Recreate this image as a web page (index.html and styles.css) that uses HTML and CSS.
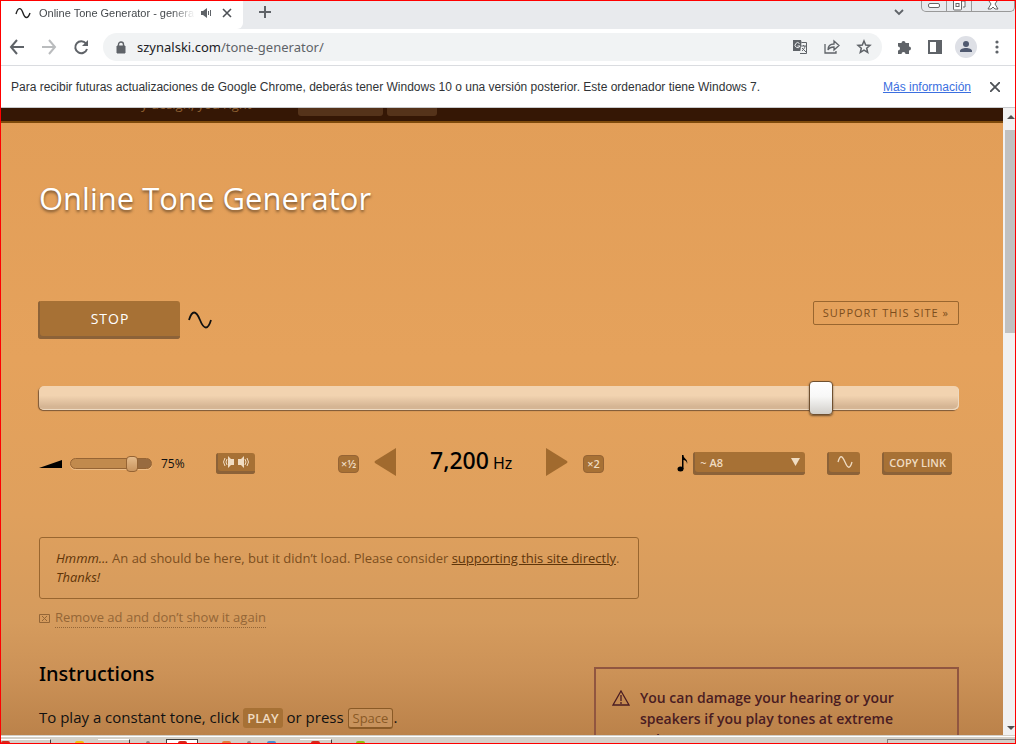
FILE: index.html
```html
<!DOCTYPE html>
<html lang="en">
<head>
    <meta charset="UTF-8">
    <meta name="viewport" content="width=device-width, initial-scale=1.0">
    <title>Online Tone Generator</title>
    <link rel="stylesheet" href="styles.css">
</head>
<body>
    <!-- Tab strip -->
    <div class="tab-strip">
        <div class="tab">
            <svg width="16" height="16" viewBox="0 0 16 16" fill="none" stroke="#222" stroke-width="1.4"><path d="M1 9C3 2 6 2 8 8s5 6 7 0"/></svg>
            <span class="tab-title">Online Tone Generator - genera</span>
            <svg class="tab-sound" width="12" height="12" viewBox="0 0 12 12" fill="#5f6368"><path d="M1 4h2l4-3v10L3 8H1zM8 4h1v4H8zM10 3h1v6h-1z"/></svg>
            <button class="icon-btn" aria-label="Close tab"><svg width="10" height="10" viewBox="0 0 10 10" stroke="#4d5156" stroke-width="1.6"><path d="M1 1l8 8M9 1L1 9"/></svg></button>
        </div>
        <button class="icon-btn new-tab" aria-label="New tab"><svg width="12" height="12" viewBox="0 0 12 12" stroke="#5f6368" stroke-width="2"><path d="M6 0v12M0 6h12"/></svg></button>
        <button class="icon-btn tab-search" aria-label="Search tabs"><svg width="12" height="8" viewBox="0 0 12 8" fill="none" stroke="#5f6368" stroke-width="1.8"><path d="M2 1l4 4 4-4"/></svg></button>
        <div class="window-buttons">
            <button aria-label="Minimize"><svg width="12" height="6" viewBox="0 0 12 6" fill="#fff" stroke="#666"><rect x=".5" y=".5" width="11" height="4" rx="1.5"/></svg></button>
            <button aria-label="Restore"><svg width="14" height="10" viewBox="0 0 14 10" fill="#fff" stroke="#666"><path d="M10 0h3v6h-2"/><rect x="1.500" y="-2" width="8" height="11" rx="1"/><rect x="4" y="2.500" width="3" height="3"/></svg></button>
            <button aria-label="Close"><svg width="12" height="9" viewBox="0 0 12 9" fill="#fff" stroke="#666"><path d="M2 0l2 3L1 8h3l2-2 2 2h3L8 3l2-3"/></svg></button>
        </div>
    </div>

    <!-- Toolbar -->
    <div class="toolbar">
        <button class="icon-btn" aria-label="Back"><svg width="16" height="16" viewBox="0 0 16 16" fill="none" stroke="#5f6368" stroke-width="2"><path d="M15 8H2M8 1L2 8l6 7"/></svg></button>
        <button class="icon-btn" aria-label="Forward"><svg width="16" height="16" viewBox="0 0 16 16" fill="none" stroke="#babcbe" stroke-width="2"><path d="M1 8h13M8 1l6 7-6 7"/></svg></button>
        <button class="icon-btn" aria-label="Reload"><svg width="16" height="16" viewBox="0 0 16 16" fill="none" stroke="#5f6368" stroke-width="2"><path d="M13 4.500A6 6 0 1 0 14 10"/><path d="M15 1v6H9z" fill="#5f6368" stroke="none"/></svg></button>
        <div class="address-bar">
            <svg width="10" height="13" viewBox="0 0 10 13"><path d="M1 5h8v7H1z" fill="#5f6368" stroke="#5f6368"/><path d="M2.500 5V3.500a2.500 2.500 0 0 1 5 0V5" fill="none" stroke="#5f6368" stroke-width="1.400"/></svg>
            <span class="url"><b>szynalski.com</b>/tone-generator/</span>
            <button class="icon-btn" aria-label="Translate"><svg width="16" height="16" viewBox="0 0 16 16"><path d="M1 1h8l3 11H1z" fill="#5f6368"/><path d="M9.500 3.500h5v11H8" fill="#f1f3f4" stroke="#5f6368"/><path d="M7.500 4.500a2.500 2.500 0 1 0 .5 2.500H5.500" fill="none" stroke="#f1f3f4"/><path d="M9 7h5M11.500 6v1M13 7c0 2-2 4-3 5M10 9l4 4" fill="none" stroke="#5f6368"/></svg></button>
            <button class="icon-btn" aria-label="Share"><svg width="16" height="16" viewBox="0 0 16 16" fill="none" stroke="#5f6368" stroke-width="1.300"><path d="M1 5v9h11v-2M4 11c0-4 2-6 6-6V2l5 4.500L10 11V8c-3 0-5 1-6 3z"/></svg></button>
            <button class="icon-btn" aria-label="Bookmark"><svg width="16" height="16" viewBox="0 0 16 16" fill="none" stroke="#5f6368" stroke-width="1.500"><path d="M8 2l1.700 4 4.300.4-3.300 2.800 1 4.300L8 11.200l-3.700 2.300 1-4.300L2 6.400 6.300 6z"/></svg></button>
        </div>
        <button class="icon-btn" aria-label="Extensions"><svg width="16" height="16" viewBox="0 0 16 16" fill="#5f6368"><path d="M2 4h3.500a2 2 0 1 1 4 0H13v3.500a2 2 0 1 1 0 4V15H9.500a2 2 0 0 0-4 0H2v-3.500a2 2 0 0 0 0-4z"/></svg></button>
        <button class="icon-btn" aria-label="Side panel"><svg width="14" height="14" viewBox="0 0 14 14" fill="none" stroke="#5f6368" stroke-width="2"><path d="M1 1h12v12H1z"/><path d="M9 1h4v12H9z" fill="#5f6368"/></svg></button>
        <button class="icon-btn" aria-label="Profile"><svg width="22" height="22" viewBox="0 0 22 22"><circle cx="11" cy="11" r="11" fill="#dee0e6"/><circle cx="11" cy="8" r="3" fill="#505a70"/><path d="M5 16v-1c0-4 12-4 12 0v1z" fill="#505a70"/></svg></button>
        <button class="icon-btn" aria-label="Menu"><svg width="4" height="14" viewBox="0 0 4 14" fill="#5f6368"><circle cx="2" cy="2" r="1.600"/><circle cx="2" cy="7" r="1.600"/><circle cx="2" cy="12" r="1.600"/></svg></button>
    </div>

    <!-- Info bar -->
    <div class="infobar">
        <span>Para recibir futuras actualizaciones de Google Chrome, deberás tener Windows 10 o una versión posterior. Este ordenador tiene Windows 7.</span>
        <a href="#">Más información</a>
        <button class="icon-btn" aria-label="Cerrar"><svg width="10" height="10" viewBox="0 0 10 10" stroke="#4d5156" stroke-width="1.800"><path d="M0 0l10 10M10 0L0 10"/></svg></button>
    </div>

    <div class="viewport">
        <div class="page">
            <header class="site-header">
                <span class="site-note">y design, you right</span>
                <span class="pill pill-wide"></span>
                <span class="pill"></span>
            </header>

            <main>
                <h1>Online Tone Generator</h1>

                <div class="play-row">
                    <button class="btn play-btn">STOP</button>
                    <svg width="24" height="18" viewBox="0 0 24 18" fill="none" stroke="#111" stroke-width="1.800"><path d="M1 9C4 -1 8 -1 12 9s8 10 11 0"/></svg>
                    <a class="support" href="#">SUPPORT THIS SITE »</a>
                </div>

                <input class="freq-slider" type="range" min="0" max="1000" value="859" aria-label="Frequency">

                <div class="controls">
                    <div class="volume">
                        <label for="volume" aria-label="Volume"><svg width="23" height="8" viewBox="0 0 23 8"><path d="M0 8L23 0v8z"/></svg></label>
                        <span class="volume-track"><input id="volume" type="range" min="0" max="100" value="75"></span>
                        <span class="volume-value">75%</span>
                        <button class="btn small-btn balance" aria-label="Balance">
                            <svg width="26" height="12" viewBox="0 0 26 12" fill="#f0dcc2"><path d="M11 3H8L5 0v12l3-3h3zM15 3h3l3-3v12l-3-3h-3z"/><path d="M4 3q-2 3 0 6M2 2q-3 4 0 8M22 3q2 3 0 6M24 2q3 4 0 8" fill="none" stroke="#f0dcc2"/></svg>
                        </button>
                    </div>

                    <div class="frequency">
                        <button class="octave">×½</button>
                        <button class="step" aria-label="Decrease"><svg width="22" height="28" viewBox="0 0 22 28" fill="#a16a2e"><path d="M22 0v28L1 15q-1-1 0-2z"/></svg></button>
                        <span class="freq-value">7,200 <small>Hz</small></span>
                        <button class="step" aria-label="Increase"><svg width="22" height="28" viewBox="0 0 22 28" fill="#a16a2e"><path d="M0 0v28L21 15q1-1 0-2z"/></svg></button>
                        <button class="octave">×2</button>
                    </div>

                    <div class="extras">
                        <label for="note" aria-label="Note"><svg width="11" height="17" viewBox="0 0 11 17"><ellipse cx="3.500" cy="14" rx="3" ry="2.500"/><path d="M5 0h1.500c0 4 5 4 3.500 9 0-3-2-4-3.500-4v9H5z"/></svg></label>
                        <div class="note-box">
                            <select id="note" class="btn small-btn note-select"><option>~ A8</option></select>
                            <svg class="note-arrow" width="9" height="8" viewBox="0 0 9 8" fill="#f0dcc2"><path d="M0 0h9L4.500 8z"/></svg>
                        </div>
                        <button class="btn small-btn wave" aria-label="Wave type"><svg width="16" height="12" viewBox="0 0 16 12" fill="none" stroke="#f0dcc2" stroke-width="1.300"><path d="M1 6C3-1 5-1 8 6s5 7 7 0"/></svg></button>
                        <button class="btn small-btn">COPY LINK</button>
                    </div>
                </div>

                <div class="ad-box"><em>Hmmm…</em> An ad should be here, but it didn’t load. Please consider <a href="#">supporting this site directly</a>. <em>Thanks!</em></div>
                <div class="remove-ad">
                    <svg width="11" height="9" viewBox="0 0 11 9" fill="none" stroke="#946637"><path d="M.5.5h10v8H.5zM3 2l5 5M8 2L3 7"/></svg>
                    <a href="#">Remove ad and don’t show it again</a>
                </div>

                <div class="columns">
                    <section class="instructions">
                        <h2>Instructions</h2>
                        <p>To play a constant tone, click <span class="play-key">PLAY</span> or press <kbd>Space</kbd>.</p>
                    </section>
                    <aside class="warning">
                        <svg width="18" height="16" viewBox="0 0 18 16" fill="none" stroke="#4a1c22" stroke-width="1.300"><path d="M9 1l8 14H1zM9 5v6M9 12v2"/></svg>
                        <p>You can damage your hearing or your speakers if you play tones at extreme volumes.</p>
                    </aside>
                </div>
            </main>
        </div>

        <div class="scrollbar">
            <span class="arrow-up"></span>
            <span class="scroll-thumb"></span>
            <span class="arrow-down"></span>
        </div>
    </div>

    <!-- Taskbar -->
    <div class="taskbar">
        <span class="task"><i class="red"></i></span>
        <i class="yellow"></i>
        <span class="task short"></span>
        <i class="gray"></i>
        <span class="task short active"><i class="red"></i></span>
        <i class="orange"></i>
        <i class="gray"></i>
        <i class="blue"></i>
        <span class="task short"><i class="red"></i></span>
        <i class="green"></i>
        <span class="tray"></span>
    </div>
</body>
</html>
```
FILE: styles.css
```css
* {
    box-sizing: border-box;
}

body {
    margin: 0;
    height: 100vh;
    display: flex;
    flex-direction: column;
    overflow: hidden;
    border: 1px solid #f00;
    font-family: "Open Sans", sans-serif;
    color: #111;
    background-color: #fff;
}

svg {
    display: block;
    flex-shrink: 0;
}

button {
    font-family: inherit;
    cursor: pointer;
}

.icon-btn {
    display: flex;
    padding: 0;
    border: none;
    background: none;
}

/* Browser */
.tab-strip,
.toolbar,
.infobar {
    font-family: "Liberation Sans", sans-serif;
    flex-shrink: 0;
}

.tab-strip {
    display: flex;
    height: 28px;
    background-color: #e8eaed;
}

.tab {
    display: flex;
    align-items: center;
    width: 242px;
    padding: 0 11px 5px 14px;
    background-color: #fff;
    border-bottom-right-radius: 6px;
}

.tab-title {
    width: 156px;
    margin-left: 8px;
    overflow: hidden;
    white-space: nowrap;
    font-size: 11px;
    color: #45494d;
    -webkit-mask-image: linear-gradient(90deg, #000 85%, transparent);
    mask-image: linear-gradient(90deg, #000 85%, transparent);
}

.tab-sound {
    margin: 0 10px 0 5px;
}

.new-tab {
    margin: 5px 0 0 16px;
    align-self: flex-start;
}

.tab-search {
    margin: 8px 16px 0 auto;
    align-self: flex-start;
}

.window-buttons {
    display: flex;
    height: 11px;
    border: 1px solid #999;
    border-top: none;
    border-radius: 0 0 5px 5px;
}

.window-buttons button {
    display: flex;
    justify-content: center;
    width: 25px;
    padding: 2px 0 0;
    border: none;
    border-right: 1px solid #999;
    background: none;
}

.window-buttons button:nth-child(2) {
    padding: 0;
}

.window-buttons button:last-child {
    width: 42px;
    padding: 0;
    border: none;
}

.toolbar {
    display: flex;
    align-items: center;
    gap: 16px;
    height: 37px;
    padding: 0 16px 0 8px;
    border-bottom: 1px solid #dadce0;
}

.toolbar > .icon-btn:nth-last-child(2) {
    margin: 0 2px 0 -3px;
}

.address-bar {
    flex: 1;
    display: flex;
    align-items: center;
    gap: 16px;
    height: 28px;
    margin: 0 -2px;
    padding: 0 10px 0 13px;
    border-radius: 14px;
    background-color: #f1f3f4;
}

.url {
    flex: 1;
    margin-left: -5px;
    font-family: "Noto Sans", sans-serif;
    font-size: 13px;
    color: #5f6368;
}

.url b {
    font-weight: normal;
    color: #202124;
}

.infobar {
    display: flex;
    align-items: center;
    height: 42px;
    padding: 0 15px 0 10px;
    border-bottom: 1px solid #c8cacd;
    font-size: 12px;
    color: #303336;
}

.infobar a {
    margin: 0 19px 0 auto;
    color: #3b6fe0;
}

/* Page */
.viewport {
    flex: 1;
    min-height: 0;
    display: flex;
}

.page {
    flex: 1;
    overflow: hidden;
    background: linear-gradient(#e29e58, #e5a25c 40%, #dfa05d 65%, #d59b5d 82%, #cc9257 90%, #bb824a);
}

.site-header {
    display: flex;
    align-items: flex-end;
    gap: 4px;
    height: 15px;
    padding: 0 38px 5px 140px;
    overflow: hidden;
    border-bottom: 2px solid #7d4a0c;
    background-color: #351705;
}

.site-note {
    width: 153px;
    line-height: 24px;
    font-size: 13px;
    color: #8d5f31;
}

.pill {
    width: 50px;
    height: 26px;
    border-radius: 3px;
    background-color: #55331a;
}

.pill-wide {
    width: 85px;
}

main {
    padding: 53px 44px 0 38px;
}

h1 {
    margin: 0 0 81px;
    font-size: 31px;
    line-height: 44px;
    font-weight: 400;
    color: #fff;
    text-shadow: 0 2px 3px rgba(0, 0, 0, 0.5);
}

.btn {
    border: none;
    border-radius: 3px;
    background-color: #a77135;
    color: #f0dcc2;
    box-shadow: inset 2px -3px 0 #8c6238;
}

.play-row {
    display: flex;
    align-items: center;
    gap: 8px;
    margin-bottom: 42px;
}

.play-btn {
    width: 142px;
    height: 38px;
    margin-left: -1px;
    padding: 0 0 3px 2px;
    font-size: 14px;
    font-weight: 500;
    letter-spacing: 1px;
    color: #fff;
}

.support {
    align-self: flex-start;
    margin-left: auto;
    padding: 0 9px;
    border: 1px solid #99662f;
    border-radius: 2px;
    font-size: 11px;
    line-height: 22px;
    letter-spacing: 1px;
    color: #7c4e1d;
    text-decoration: none;
}

input[type="range"] {
    -webkit-appearance: none;
    appearance: none;
    display: block;
    margin: 0;
    background: none;
}

.freq-slider {
    width: 100%;
    height: 34px;
}

.freq-slider::-webkit-slider-runnable-track {
    height: 24px;
    border-radius: 5px;
    background: linear-gradient(#f2d3b0 40%, #d5b594 85%);
    box-shadow: inset -1px -1px 0 #ecd9c1, -1px 1px 1px #7b5737;
}

.freq-slider::-webkit-slider-thumb {
    -webkit-appearance: none;
    width: 24px;
    height: 34px;
    margin-top: -5px;
    border: 1px solid #70502f;
    border-radius: 4px;
    background: linear-gradient(#fff, #f8f8f7 45%, #d2cfca);
    box-shadow: 0 1px 2px rgba(0, 0, 0, 0.5);
}

.controls {
    display: flex;
    align-items: center;
    justify-content: space-between;
    height: 33px;
    margin: 32px 7px 57px 0;
}

.volume,
.frequency,
.extras {
    display: flex;
    align-items: center;
}

.volume-track {
    width: 82px;
    height: 11px;
    margin: 0 9px 0 8px;
    border: 1px solid #966434;
    border-radius: 6px;
    background: linear-gradient(90deg, #c18a4d 75%, #986b40 75%);
    box-shadow: 0 1px 0 #edbd87;
}

.volume-track input {
    width: calc(100% + 13px);
    height: 17px;
    margin: -4px -6px;
}

.volume-track input::-webkit-slider-thumb {
    -webkit-appearance: none;
    width: 12px;
    height: 16px;
    border: 1px solid #966434;
    border-radius: 4px;
    background: linear-gradient(#e5bb8b, #c9955f);
}

.volume-value {
    width: 25px;
    font-size: 12px;
}

.small-btn {
    display: flex;
    align-items: center;
    height: 23px;
    padding: 0 6px 3px 7px;
    font-size: 11px;
    font-weight: 600;
}

.balance {
    height: 21px;
    margin-left: 30px;
}

.frequency {
    margin-left: 10px;
}

.octave {
    width: 21px;
    height: 18px;
    padding: 0;
    border: 1px solid #966434;
    border-radius: 4px;
    background-color: #a77135;
    font-size: 11px;
    line-height: 16px;
    font-weight: 600;
    color: #f0dcc2;
}

.step {
    margin: -4px 15px 0;
    padding: 0;
    border: none;
    background: none;
}

.freq-value {
    width: 120px;
    margin: -4px 0 0;
    text-align: center;
    white-space: nowrap;
    font-family: "Noto Sans", "Open Sans", sans-serif;
    font-size: 23px;
    line-height: 30px;
    font-weight: 500;
    color: #000;
}

.freq-value small {
    margin-left: -2px;
    font-size: 16px;
    font-weight: 400;
}

.extras label {
    margin-right: 5px;
}

.note-box {
    position: relative;
}

.note-select {
    -webkit-appearance: none;
    appearance: none;
    width: 112px;
    font-family: inherit;
}

.note-arrow {
    position: absolute;
    top: 6px;
    right: 5px;
    pointer-events: none;
}

.wave {
    width: 33px;
    margin: 0 22px;
    padding-left: 10px;
}

.ad-box {
    max-width: 600px;
    padding: 11px 16px;
    border: 1px solid #99662f;
    border-radius: 3px;
    font-size: 13px;
    line-height: 19px;
    color: #7c4e1d;
}

.ad-box em,
.ad-box a {
    color: #5f3509;
}

.remove-ad {
    display: flex;
    align-items: center;
    gap: 5px;
    margin: 9px 0 32px;
    font-size: 13px;
}

.remove-ad a {
    line-height: 19px;
    border-bottom: 1px dotted #946637;
    color: #946637;
    text-decoration: none;
}

.columns {
    display: flex;
    justify-content: space-between;
}

h2 {
    margin: 0 0 17px;
    font-family: "Noto Sans", "Open Sans", sans-serif;
    font-size: 20px;
    line-height: 28px;
    font-weight: 500;
    color: #000;
}

.instructions p {
    margin: 0;
    font-size: 15px;
    line-height: 24px;
}

.play-key {
    padding: 1px 4px;
    border-radius: 3px;
    background-color: #a77135;
    font-size: 13px;
    font-weight: 600;
    color: #f0dcc2;
}

kbd {
    padding: 0 4px;
    border: 1px solid #8a5a26;
    border-bottom-width: 2px;
    border-radius: 3px;
    background-color: #c8935d;
    font-family: inherit;
    font-size: 13px;
    color: #8a5a26;
}

.warning {
    display: flex;
    gap: 10px;
    width: 365px;
    margin-top: 7px;
    padding: 18px 16px;
    border: 2px solid #915640;
}

.warning svg {
    margin-top: 3px;
}

.warning p {
    width: 280px;
    margin: 0;
    font-size: 14px;
    line-height: 21px;
    font-weight: 600;
    color: #4a1c22;
}

.scrollbar {
    display: flex;
    flex-direction: column;
    width: 12px;
    padding: 7px 0 5px 2px;
    overflow: hidden;
    background-color: #f1f1f1;
}

.arrow-up,
.arrow-down {
    margin-left: 2px;
    width: 8px;
    border: 4px solid transparent;
    border-top: none;
    border-bottom-color: #505050;
}

.arrow-down {
    margin-top: auto;
    border: 4px solid transparent;
    border-bottom: none;
    border-top-color: #505050;
}

.scroll-thumb {
    height: 203px;
    margin-top: 11px;
    background-color: #c1c1c1;
}

/* Taskbar */
.taskbar {
    display: flex;
    align-items: flex-end;
    gap: 24px;
    height: 8px;
    flex-shrink: 0;
    overflow: hidden;
    border-top: 1px solid #d4d0c8;
    box-shadow: inset 0 1px 0 #fff;
    background-color: #d4d0c8;
}

.taskbar i {
    width: 9px;
    height: 2px;
    border-radius: 3px 3px 0 0;
}

.task {
    display: flex;
    align-items: flex-end;
    width: 50px;
    height: 4px;
    border-top: 1px solid #fff;
    border-right: 1px solid #404040;
}

.task.short {
    justify-content: center;
    width: 32px;
}

.task.active {
    border: 1px solid #404040;
    border-bottom: none;
    background-color: #fff;
}

.taskbar > .yellow {
    margin-right: -10px;
}

.taskbar > .gray {
    width: 4px;
    margin: 0 -8px;
}

.red { background-color: #d4281c; }
.yellow { background-color: #f0c010; }
.orange { background-color: #e08040; }
.gray { background-color: #888; }
.blue { background-color: #4a90d0; }
.green { background-color: #8cc010; }

.tray {
    width: 128px;
    height: 4px;
    margin-left: auto;
    border: 1px solid #808080;
    border-width: 1px 0 0 1px;
}
```
